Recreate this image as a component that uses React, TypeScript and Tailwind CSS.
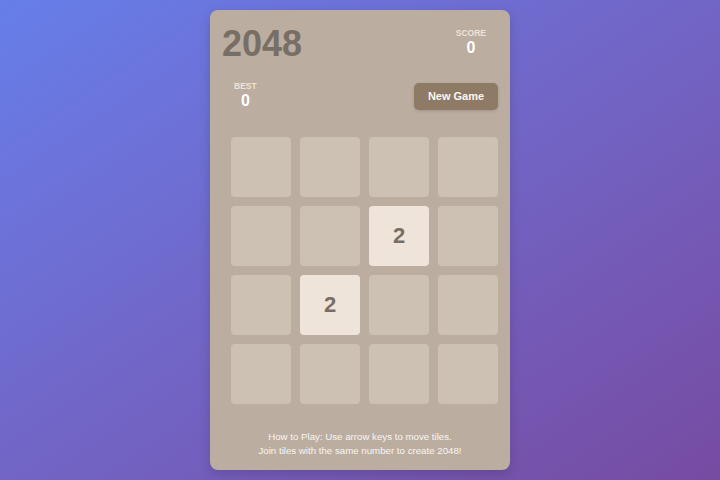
import React from "react";

const board: (number | null)[][] = [
  [null, null, null, null],
  [null, null, 2, null],
  [null, 2, null, null],
  [null, null, null, null],
];

function Tile({ value }: { value: number | null }) {
  if (value === null) {
    return <div className="w-[60px] h-[60px] rounded-[4px] bg-[#cdc1b4]" />;
  }
  return (
    <div className="w-[60px] h-[60px] rounded-[4px] bg-[#eee4da] flex items-center justify-center text-[22px] font-bold text-[#776e65] leading-none">
      {value}
    </div>
  );
}

function StatBox({ label, value }: { label: string; value: number }) {
  return (
    <div className="flex flex-col items-center px-3">
      <div className="text-[8.5px] leading-[10px] font-bold uppercase text-[#eee4da]">{label}</div>
      <div className="text-[16px] leading-[20px] font-bold text-white">{value}</div>
    </div>
  );
}

export default function App() {
  return (
    <div
      className="min-h-screen w-full flex items-center justify-center bg-gradient-to-br from-[#667eea] to-[#764ba2]"
      style={{ fontFamily: '"Liberation Sans", Arial, sans-serif' }}
    >
      <div className="w-[300px] h-[460px] rounded-lg bg-[#bbada0] px-3 pt-3 pb-[13px] flex flex-col shadow-[0_4px_12px_rgba(0,0,0,0.15)]">
        <div className="flex justify-between items-start h-[43px]">
          <h1 className="text-[36px] leading-[43px] font-bold text-[#776e65]">2048</h1>
          <div className="pt-[6px]">
            <StatBox label="Score" value={0} />
          </div>
        </div>
        <div className="mt-[16px] h-[30px] flex justify-between items-center">
          <StatBox label="Best" value={0} />
          <button className="h-[27px] w-[84px] rounded-[5px] bg-[#8f7a66] text-[11px] font-bold text-[#f9f6f2] shadow-[0_1px_3px_rgba(0,0,0,0.15)]">
            New Game
          </button>
        </div>
        <div className="mt-[26px] flex justify-end">
          <div className="grid grid-cols-4 gap-[9px]">
            {board.flat().map((v, i) => (
              <Tile key={i} value={v} />
            ))}
          </div>
        </div>
        <div className="mt-[26px] text-center text-[9.7px] leading-[13.5px] text-[#f9f6f2]">
          <p>How to Play: Use arrow keys to move tiles.</p>
          <p>Join tiles with the same number to create 2048!</p>
        </div>
      </div>
    </div>
  );
}
